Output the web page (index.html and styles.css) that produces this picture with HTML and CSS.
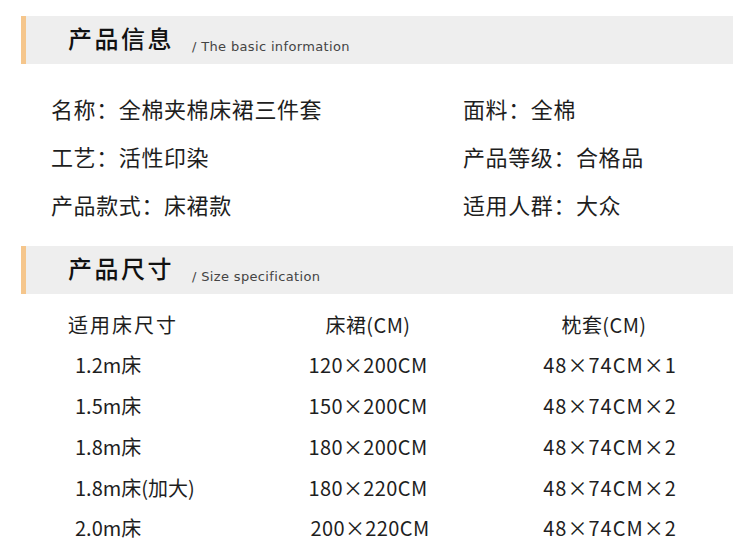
FILE: index.html
```html
<!DOCTYPE html>
<html lang="zh-CN">
<head>
<meta charset="utf-8">
<title>产品信息</title>
<link rel="stylesheet" href="styles.css">
</head>
<body>
<div class="page">
  <div class="band">
    <span class="band-title">产品信息</span>
    <span class="band-sub">/ The basic information</span>
  </div>
  <div class="info">
    <div class="info-item">名称：全棉夹棉床裙三件套</div>
    <div class="info-item">面料：全棉</div>
    <div class="info-item">工艺：活性印染</div>
    <div class="info-item">产品等级：合格品</div>
    <div class="info-item">产品款式：床裙款</div>
    <div class="info-item">适用人群：大众</div>
  </div>
  <div class="band band-second">
    <span class="band-title">产品尺寸</span>
    <span class="band-sub">/ Size specification</span>
  </div>
  <div class="sizes">
    <div class="cell c1 head">适用床尺寸</div>
    <div class="cell c2 head">床裙(CM)</div>
    <div class="cell c3 head">枕套(CM)</div>

    <div class="cell c1 val">1.2m床</div>
    <div class="cell c2">120×200CM</div>
    <div class="cell c3">48×74CM×1</div>

    <div class="cell c1 val">1.5m床</div>
    <div class="cell c2">150×200CM</div>
    <div class="cell c3">48×74CM×2</div>

    <div class="cell c1 val">1.8m床</div>
    <div class="cell c2">180×200CM</div>
    <div class="cell c3">48×74CM×2</div>

    <div class="cell c1 val">1.8m床(加大)</div>
    <div class="cell c2">180×220CM</div>
    <div class="cell c3">48×74CM×2</div>

    <div class="cell c1 val">2.0m床</div>
    <div class="cell c2 shift">200×220CM</div>
    <div class="cell c3">48×74CM×2</div>
  </div>
</div>
</body>
</html>
```

FILE: styles.css
```css
html, body {
  margin: 0;
  padding: 0;
  background: #ffffff;
}

body {
  width: 750px;
  height: 553px;
  overflow: hidden;
  font-family: "Noto Sans CJK SC", "Noto Sans", sans-serif;
  color: #1e1e1e;
}

.page {
  padding-top: 16px;
}

.band {
  margin-left: 21px;
  width: 712px;
  height: 48px;
  box-sizing: border-box;
  background: #eeeeee;
  border-left: 5px solid #f5c68c;
  display: flex;
  align-items: center;
  padding-left: 42px;
}

.band-second {
  margin-top: 18px;
}

.band-title {
  font-size: 24px;
  font-weight: 500;
  letter-spacing: 2.5px;
  color: #111111;
  line-height: 1;
  margin-top: -4px;
}

.band-sub {
  font-family: "DejaVu Sans", sans-serif;
  font-size: 13px;
  color: #444444;
  margin-left: 18px;
  margin-top: 12px;
  letter-spacing: 0.35px;
}

.info {
  margin-top: 20px;
  padding-left: 51px;
  display: grid;
  grid-template-columns: 412px 1fr;
  grid-auto-rows: 48px;
  align-items: center;
}

.info-item {
  font-size: 22px;
  letter-spacing: 0.6px;
  line-height: 1;
  color: #1e1e1e;
}

.sizes {
  margin-top: 11px;
  padding-left: 68px;
  display: grid;
  grid-template-columns: 200px 200px 280px;
  grid-template-rows: 40px 40px 41px 41px 42px 37px;
  align-items: center;
  font-size: 20px;
  line-height: 1;
  color: #1e1e1e;
}

.cell {
  white-space: nowrap;
}

.c1.head {
  letter-spacing: 2px;
}

.c1.val {
  padding-left: 7px;
}

.c2, .c3 {
  text-align: center;
  letter-spacing: 0.4px;
}

.c3 {
  padding-left: 4px;
  letter-spacing: 1px;
}

.c3.head {
  padding-left: 0;
  margin-left: -8px;
  letter-spacing: 0.4px;
}

.shift {
  padding-left: 4px;
}
```
